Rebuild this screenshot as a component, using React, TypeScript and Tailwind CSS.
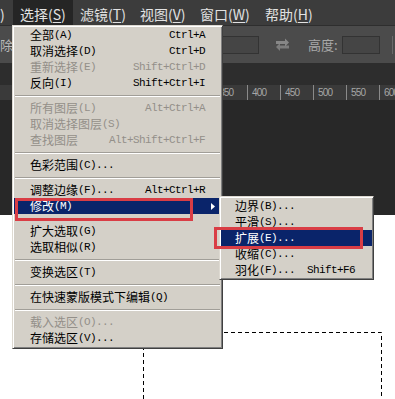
import type { ReactNode } from 'react'

// Photoshop "选择" menu open, with 修改 → 扩展 highlighted.

type Row =
  | { kind: 'item'; cn: string; en?: string; sc?: string; off?: boolean; on?: boolean; sub?: boolean }
  | { kind: 'sep' }
  | { kind: 'gap' }

const MAIN: Row[] = [
  { kind: 'item', cn: '全部', en: '(A)', sc: 'Ctrl+A' },
  { kind: 'item', cn: '取消选择', en: '(D)', sc: 'Ctrl+D' },
  { kind: 'item', cn: '重新选择', en: '(E)', sc: 'Shift+Ctrl+D', off: true },
  { kind: 'item', cn: '反向', en: '(I)', sc: 'Shift+Ctrl+I' },
  { kind: 'sep' },
  { kind: 'item', cn: '所有图层', en: '(L)', sc: 'Alt+Ctrl+A', off: true },
  { kind: 'item', cn: '取消选择图层', en: '(S)', off: true },
  { kind: 'item', cn: '查找图层', sc: 'Alt+Shift+Ctrl+F', off: true },
  { kind: 'sep' },
  { kind: 'item', cn: '色彩范围', en: '(C)...' },
  { kind: 'sep' },
  { kind: 'item', cn: '调整边缘', en: '(F)...', sc: 'Alt+Ctrl+R' },
  { kind: 'item', cn: '修改', en: '(M)', on: true, sub: true },
  { kind: 'gap' },
  { kind: 'item', cn: '扩大选取', en: '(G)' },
  { kind: 'item', cn: '选取相似', en: '(R)' },
  { kind: 'sep' },
  { kind: 'item', cn: '变换选区', en: '(T)' },
  { kind: 'sep' },
  { kind: 'item', cn: '在快速蒙版模式下编辑', en: '(Q)' },
  { kind: 'sep' },
  { kind: 'item', cn: '载入选区', en: '(O)...', off: true },
  { kind: 'item', cn: '存储选区', en: '(V)...' },
]

const SUB: Row[] = [
  { kind: 'item', cn: '边界', en: '(B)...' },
  { kind: 'item', cn: '平滑', en: '(S)...' },
  { kind: 'item', cn: '扩展', en: '(E)...', on: true },
  { kind: 'item', cn: '收缩', en: '(C)...' },
  { kind: 'item', cn: '羽化', en: '(F)...', sc: 'Shift+F6' },
]

const BAR = [
  { cn: '选择', key: 'S', w: 'w-[60px]', open: true },
  { cn: '滤镜', key: 'T', w: 'w-[60px]' },
  { cn: '视图', key: 'V', w: 'w-[60px]' },
  { cn: '窗口', key: 'W', w: 'w-[65px]' },
  { cn: '帮助', key: 'H', w: 'w-[60px]' },
]

const RULER = [50, 100, 150, 200, 250, 300, 350, 400, 450, 500, 550, 600]

const CN = "font-['Noto_Sans_CJK_SC',sans-serif]"
const MONO = "font-['Liberation_Mono','Noto_Sans_CJK_SC',monospace] text-[11px] tracking-[-0.6px]"

function MenuRows({ rows, pl, pr }: { rows: Row[]; pl: string; pr: string }) {
  return (
    <>
      {rows.map((r, i) => {
        if (r.kind === 'sep')
          return (
            <div key={i} className="flex h-[9px] items-center px-px">
              <div className="h-[2px] w-full border-t border-b border-t-[#a19e98] border-b-white" />
            </div>
          )
        if (r.kind === 'gap') return <div key={i} className="h-[9px]" />
        const tone = r.on ? 'bg-[#0a246a] text-white' : r.off ? 'text-[#938f89]' : 'text-black'
        return (
          <div key={i} className={`flex h-4 items-center whitespace-nowrap ${pl} ${r.sub ? 'pr-[6px]' : pr} ${tone}`}>
            <span className={`${CN} text-[12px] leading-4`}>{r.cn}</span>
            {r.en && <span className={`${MONO} leading-4`}>{r.en}</span>}
            {r.sc && <span className={`${MONO} ml-auto leading-4`}>{r.sc}</span>}
            {r.sub && (
              <svg className="ml-auto" width="4" height="7" viewBox="0 0 4 7">
                <polygon points="0,0 4,3.5 0,7" fill="#fff" />
              </svg>
            )}
          </div>
        )
      })}
    </>
  )
}

function Panel({ className, children }: { className: string; children: ReactNode }) {
  return (
    <div
      className={`absolute border border-t-[#dedad2] border-l-[#dedad2] border-r-[#404040] border-b-[#404040] bg-[#d4d0c8] p-px shadow-[inset_1px_1px_0_#ffffff,inset_-1px_-1px_0_#808080] ${className}`}
    >
      {children}
    </div>
  )
}

function SwapIcon() {
  return (
    <svg width="15" height="13" viewBox="0 0 15 13" fill="#8e8e8e">
      <path d="M1 3h9V0.5L14 4.5 10 8.5V6H1z" opacity="0.9" />
      <path d="M14 7.5H5V5L1 9l4 4v-2.5h9z" opacity="0.75" />
    </svg>
  )
}

export default function App() {
  return (
    <div className="relative flex h-[399px] w-[395px] flex-col overflow-hidden bg-white">
      {/* menu bar */}
      <div className={`flex h-[25px] shrink-0 bg-[#3c3c3c] text-[14px] text-[#e2e2e2] ${CN}`}>
        <span className="w-[13px] pt-[3px] leading-[22px]">)</span>
        {BAR.map((b) => (
          <span key={b.key} className={`${b.w} pl-[7px] pt-[3px] leading-[22px] ${b.open ? 'bg-[#252525]' : ''}`}>
            {b.cn}(<span className="underline underline-offset-2">{b.key}</span>)
          </span>
        ))}
      </div>

      {/* options bar */}
      <div className={`flex h-[38px] shrink-0 items-center border-t border-[#2e2e2e] bg-[#4b4b4b] text-[13px] text-[#b9b9b9] ${CN}`}>
        <span className="w-[13px] overflow-hidden whitespace-nowrap">除</span>
        <div className="ml-[209px] h-[18px] w-[37px] border border-[#333] bg-[#454545]" />
        <span className="ml-[16px] flex w-[15px]">
          <SwapIcon />
        </span>
        <span className="ml-[18px] w-[34px] text-[#a9a9a9]">高度:</span>
        <div className="h-[18px] w-[38px] border border-[#333] bg-[#454545]" />
        <div className="ml-[12px] h-[18px] w-px bg-[#6a6a6a]" />
      </div>

      {/* document tab strip */}
      <div className="h-[22px] shrink-0 bg-[#2d2d2d]" />

      {/* ruler */}
      <div className="flex h-[15px] shrink-0 overflow-hidden bg-[#3a3a3a] pl-[16px] font-['Liberation_Sans',sans-serif] text-[10px] leading-[15px] tracking-[-0.8px] text-[#a6a6a6]">
        {RULER.map((n) => (
          <span key={n} className="w-[33px] shrink-0 border-l border-[#8a8a8a] pl-[4px]">
            {n}
          </span>
        ))}
      </div>

      {/* pasteboard */}
      <div className="h-[115px] shrink-0 bg-[#282828]" />

      {/* canvas with marching ants */}
      <div className="relative flex-1 bg-white">
        <svg className="absolute inset-0" width="395" height="184">
          <path d="M143.5 184V117.5H381.5V184" fill="none" stroke="#000" strokeDasharray="4 3" />
        </svg>
      </div>

      {/* 选择 menu */}
      <Panel className="left-[12px] top-[25px] w-[211px] pb-[2px]">
        <MenuRows rows={MAIN} pl="pl-[16px]" pr="pr-[16px]" />
      </Panel>

      {/* 修改 submenu */}
      <Panel className="left-[219px] top-[196px] w-[155px]">
        <MenuRows rows={SUB} pl="pl-[14px]" pr="pr-[17px]" />
      </Panel>

      {/* annotation boxes */}
      <div className="absolute left-[15px] top-[198px] h-[23px] w-[178px] border-[3px] border-[#d93d45]" />
      <div className="absolute left-[214px] top-[227px] h-[22px] w-[149px] border-[3px] border-[#d93d45]" />
    </div>
  )
}
